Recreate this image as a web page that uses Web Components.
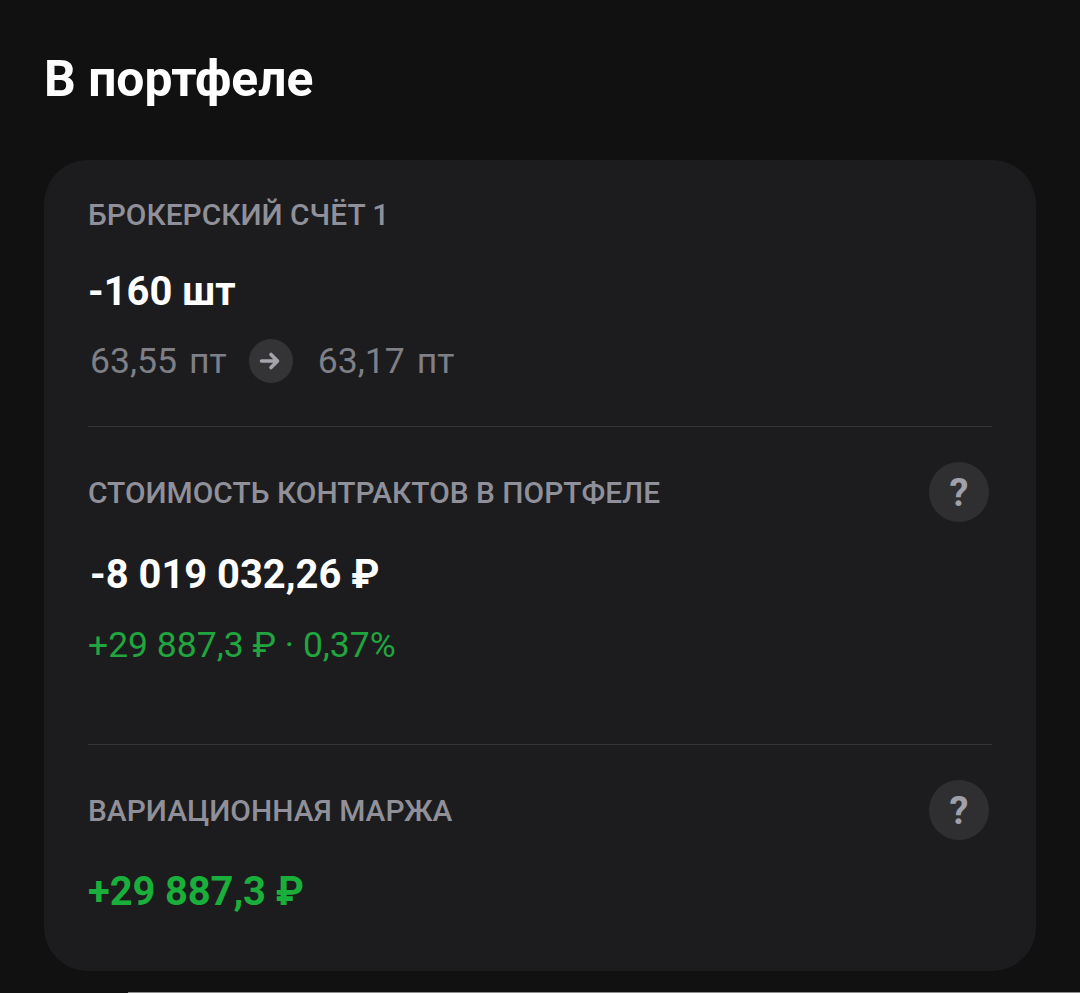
<!DOCTYPE html>
<html lang="ru">
<head>
<meta charset="utf-8">
<style>
  html, body { margin: 0; background: #111112; }
  body { font-family: Roboto, "Noto Sans", sans-serif; height: 993px; overflow: hidden; }
</style>
</head>
<body>
<portfolio-page>
  <portfolio-section label="БРОКЕРСКИЙ СЧЁТ 1" value="-160 шт" variant="first">
    <price-change from="63,55" to="63,17" unit="пт"></price-change>
  </portfolio-section>
  <portfolio-section label="СТОИМОСТЬ КОНТРАКТОВ В ПОРТФЕЛЕ" value="-8 019 032,26 ₽" help variant="second">
    <span style="color:#20a53f;font-size:35.5px;line-height:40px;display:block;margin-top:28px">+29 887,3 ₽ · 0,37%</span>
  </portfolio-section>
  <portfolio-section label="ВАРИАЦИОННАЯ МАРЖА" value="+29 887,3 ₽" help green variant="last"></portfolio-section>
</portfolio-page>

<script>
const pageTpl = document.createElement("template");
pageTpl.innerHTML = `
  <style>
    :host { display: block; height: 993px; padding: 0 44px; box-sizing: border-box; position: relative; }
    h1 { margin: 0; padding-top: 50px; height: 160px; box-sizing: border-box; font-size: 49.8px; line-height: 58px; font-weight: 700; color: #fff; }
    .card { background: #1c1c1e; border-radius: 44px; padding: 0 44px; }
    .bar { position: absolute; left: 128px; right: 0; bottom: 0; height: 1px; background: #8e8e8e; }
  </style>
  <h1>В портфеле</h1>
  <div class="card"><slot></slot></div>
  <div class="bar"></div>
`;
class PortfolioPage extends HTMLElement {
  constructor() {
    super();
    this.attachShadow({ mode: "open" });
    this.shadowRoot.appendChild(pageTpl.content.cloneNode(true));
  }
}
customElements.define("portfolio-page", PortfolioPage);

const sectionTpl = document.createElement("template");
sectionTpl.innerHTML = `
  <style>
    :host { display: block; }
    :host([variant="first"]) { padding: 35px 0 43px; border-bottom: 1px solid #343437; }
    :host([variant="second"]) { padding: 35px 0 79px; border-bottom: 1px solid #343437; }
    :host([variant="last"]) { padding: 35px 0 57px; }
    .head { display: flex; align-items: center; justify-content: space-between; min-height: 40px; }
    :host([help]) .head { min-height: 60px; }
    :host([help]) .label { padding-top: 2px; }
    .label { font-size: 29.9px; line-height: 40px; font-weight: 500; color: #8f9099; }
    .help { width: 60px; height: 60px; margin-right: 3px; padding-top: 2px; box-sizing: border-box; border-radius: 50%; background: #2f2f32; color: #a0a1a8;
      display: flex; align-items: center; justify-content: center; font-size: 38px; font-weight: 700; }
    .value { font-size: 39.9px; line-height: 44px; font-weight: 700; color: #fff; margin-top: 35px; }
    :host([variant="second"]) .value { margin-top: 31px; padding-left: 2px; }
    :host([variant="last"]) .value { margin-top: 30px; letter-spacing: -0.1px; }
    :host([green]) .value { color: #1aae3b; }
  </style>
  <div class="head"><span class="label"></span></div>
  <div class="value"></div>
  <slot></slot>
`;
class PortfolioSection extends HTMLElement {
  constructor() {
    super();
    this.attachShadow({ mode: "open" });
    this.shadowRoot.appendChild(sectionTpl.content.cloneNode(true));
    this.shadowRoot.querySelector(".label").textContent = this.getAttribute("label");
    this.shadowRoot.querySelector(".value").textContent = this.getAttribute("value");
    if (this.hasAttribute("help")) {
      const help = document.createElement("span");
      help.className = "help";
      help.textContent = "?";
      this.shadowRoot.querySelector(".head").appendChild(help);
    }
  }
}
customElements.define("portfolio-section", PortfolioSection);

class PriceChange extends HTMLElement {
  constructor() {
    super();
    this.attachShadow({ mode: "open" });
    const unit = this.getAttribute("unit");
    this.shadowRoot.innerHTML = `
      <style>
        :host { display: flex; align-items: center; margin-top: 25px; height: 44px; padding-left: 2px;
          font-size: 35.6px; color: #7e7f87; }
        .sep { margin-left: 12px; }
        .arrow { width: 44px; height: 44px; border-radius: 50%; background: #343437; margin: 0 25px 0 22px;
          display: flex; align-items: center; justify-content: center; }
      </style>
      <span>${this.getAttribute("from")}<span class="sep">${unit}</span></span>
      <span class="arrow">
        <svg width="24" height="24" viewBox="0 0 24 24" fill="none" stroke="#a4a5ac" stroke-width="3.6" stroke-linecap="round" stroke-linejoin="round" style="margin:-1px 0 0 -2px">
          <path d="M3.5 12H19M13 5.5 19.5 12 13 18.5"/>
        </svg>
      </span>
      <span>${this.getAttribute("to")}<span class="sep">${unit}</span></span>
    `;
  }
}
customElements.define("price-change", PriceChange);
</script>
</body>
</html>
